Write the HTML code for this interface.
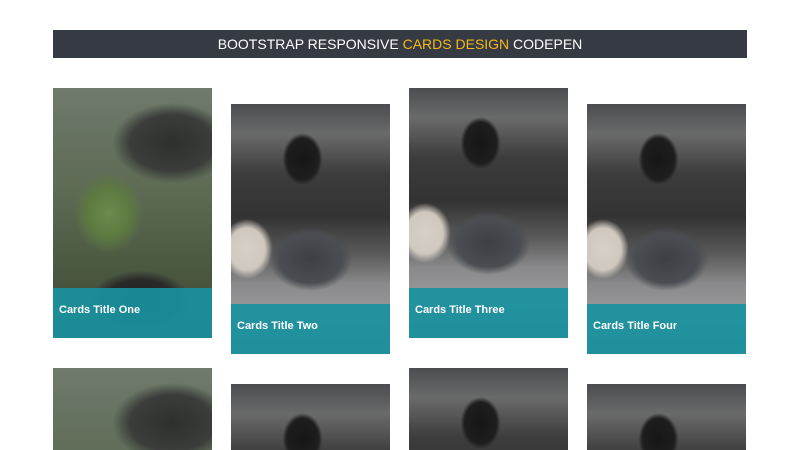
<!DOCTYPE html>
<html><head><meta charset="utf-8"><style>
*{margin:0;padding:0;box-sizing:border-box}
html,body{width:800px;height:450px;overflow:hidden;background:#fff;font-family:"Liberation Sans",sans-serif;position:relative}
.hdr{position:absolute;left:53px;top:30px;width:694px;height:28px;background:#363a42;color:#fff;font-size:14px;text-align:center;line-height:29px}
.hdr span{color:#f5b819}
.card{position:absolute;width:159px;height:250px;overflow:hidden}
.cap{position:absolute;left:0;bottom:0;width:100%;height:50px;background:rgba(25,145,160,.92);color:#fff;font-weight:bold;font-size:11px;padding:16px 0 0 6px}
.circ{background:
radial-gradient(ellipse 35px 40px at 35% 50%,#6d8a4c 0,#5d7a40 60%,transparent 100%),
radial-gradient(ellipse 60px 40px at 75% 22%,#2e302e 0,#3a3d3a 70%,transparent 100%),
radial-gradient(ellipse 50px 30px at 55% 85%,#1e1e1e 0,#2a2a2a 70%,transparent 100%),
linear-gradient(180deg,#6f7a6c 0%,#5e6b55 40%,#4c5a42 70%,#3d4436 100%);background-size:159px 250px;background-repeat:no-repeat}
.prn{background:
radial-gradient(ellipse 20px 26px at 45% 22%,#161616 0,#1e1e1e 80%,transparent 100%),
radial-gradient(ellipse 42px 32px at 50% 62%,#3c3f44 0,#4a4d52 75%,transparent 100%),
radial-gradient(ellipse 26px 30px at 10% 58%,#d6d0c8 0,#cfc8bd 70%,transparent 100%),
linear-gradient(180deg,#4a4c50 0%,#6a6a6a 12%,#3c3c3c 28%,#333 45%,#5a5a5a 60%,#8a8a8c 72%,#9a9a9c 85%,#7a7a7c 100%);background-size:159px 250px;background-repeat:no-repeat}
.r2{height:82px}
.r2b{height:66px}
</style></head><body>
<div class="hdr">BOOTSTRAP RESPONSIVE <span>CARDS DESIGN</span> CODEPEN</div>

<div class="card circ" style="left:53px;top:88px"><div class="cap">Cards Title One</div></div>
<div class="card prn" style="left:231px;top:104px"><div class="cap">Cards Title Two</div></div>
<div class="card prn" style="left:409px;top:88px"><div class="cap">Cards Title Three</div></div>
<div class="card prn" style="left:587px;top:104px"><div class="cap">Cards Title Four</div></div>

<div class="card circ r2" style="left:53px;top:368px"></div>
<div class="card prn r2b" style="left:231px;top:384px"></div>
<div class="card prn r2" style="left:409px;top:368px"></div>
<div class="card prn r2b" style="left:587px;top:384px"></div>
</body></html>
